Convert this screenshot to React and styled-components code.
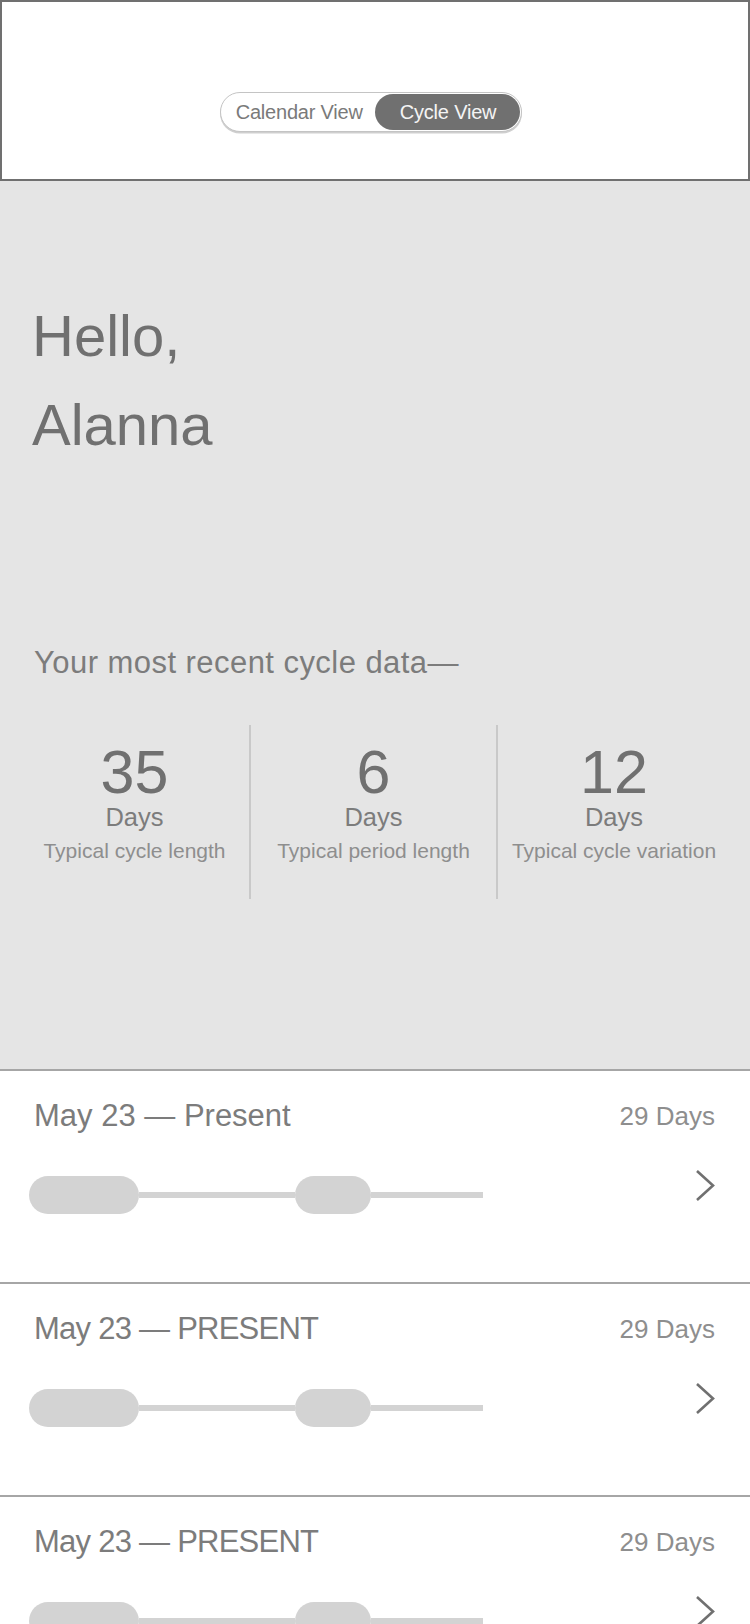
import React from 'react'
import styled, { createGlobalStyle } from 'styled-components'

const colors = {
  ink: '#707070',
  soft: '#7c7c7c',
  muted: '#8e8e8e',
  panel: '#e5e5e5',
  rule: '#a6a6a6',
  track: '#d3d3d3',
}

const GlobalStyle = createGlobalStyle`
  html, body {
    margin: 0;
    padding: 0;
    background: #fff;
  }
  body {
    font-family: "Liberation Sans", Arial, sans-serif;
    color: ${colors.ink};
    -webkit-font-smoothing: antialiased;
  }
  * { box-sizing: border-box; }
`

const Page = styled.div`
  width: 750px;
  display: flex;
  flex-direction: column;
`

const Header = styled.header`
  height: 181px;
  border: 2px solid ${colors.ink};
  display: flex;
  justify-content: center;
  align-items: flex-start;
  padding: 90px 8px 0 0;
`

const Toggle = styled.div`
  display: flex;
  align-items: center;
  height: 40px;
  padding: 1px;
  border: 1.5px solid #c4c4c4;
  border-radius: 20px;
  background: #fff;
  box-shadow: 0 1.5px 0 #cfcfcf;
`

const ToggleOption = styled.div`
  height: 100%;
  display: flex;
  align-items: center;
  padding: ${p => (p.active ? '0 24px 0 25px' : '0 12px 0 14px')};
  border-radius: 18px;
  font-size: 20px;
  letter-spacing: -0.2px;
  background: ${p => (p.active ? colors.ink : 'transparent')};
  color: ${p => (p.active ? '#f4f4f4' : '#7a7a7a')};
`

const Summary = styled.section`
  height: 888px;
  background: ${colors.panel};
  padding: 110px 0 0;
  display: flex;
  flex-direction: column;
`

const Greeting = styled.h1`
  margin: 0 0 0 32px;
  font-size: 58px;
  font-weight: 400;
  line-height: 89px;
  color: ${colors.ink};
`

const Lead = styled.p`
  margin: 176px 0 0 34px;
  font-size: 31px;
  line-height: 36px;
  color: ${colors.soft};
  letter-spacing: 0.45px;
`

const Stats = styled.div`
  margin-top: 44px;
  display: grid;
  grid-template-columns: 229px 249px 1fr;
  padding: 0 20px;
`

const Stat = styled.div`
  height: 174px;
  padding-top: 18px;
  display: flex;
  flex-direction: column;
  align-items: center;
  border-left: ${p => (p.divided ? '2px solid #c9c9c9' : 'none')};
  border-right: ${p => (p.divided ? '2px solid #c9c9c9' : 'none')};
`

const StatValue = styled.div`
  font-size: 61px;
  line-height: 59px;
  color: ${colors.ink};
`

const StatUnit = styled.div`
  font-size: 25.5px;
  line-height: 30px;
  color: ${colors.soft};
`

const StatLabel = styled.div`
  margin-top: 7px;
  font-size: 21px;
  line-height: 24px;
  color: ${colors.muted};
  white-space: nowrap;
`

const CycleRow = styled.div`
  height: 213px;
  border-top: 2px solid ${colors.rule};
  padding: 27px 35px 0 34px;
  display: flex;
  flex-direction: column;
`

const RowHead = styled.div`
  display: flex;
  justify-content: space-between;
  align-items: center;
  height: 36px;
`

const RowTitle = styled.div`
  font-size: 31px;
  letter-spacing: ${p => (p.caps ? '-0.75px' : '0')};
  color: ${colors.soft};
`

const RowDays = styled.div`
  font-size: 26px;
  color: ${colors.muted};
`

const RowBody = styled.div`
  margin-top: 42px;
  margin-left: -5px;
  display: flex;
  align-items: center;
  justify-content: space-between;
  height: 38px;
`

const Track = styled.div`
  display: flex;
  align-items: center;
`

const Phase = styled.div`
  width: ${p => p.w}px;
  height: 38px;
  border-radius: 19px;
  background: ${colors.track};
`

const Gap = styled.div`
  width: ${p => p.w}px;
  height: 6px;
  background: ${colors.track};
`

const Chevron = styled.svg`
  width: 22px;
  height: 34px;
  margin-bottom: 18px;
`

const cycles = [
  { title: 'May 23 — Present', days: '29 Days' },
  { title: 'May 23 — PRESENT', days: '29 Days', caps: true },
  { title: 'May 23 — PRESENT', days: '29 Days', caps: true },
]

const stats = [
  { value: '35', label: 'Typical cycle length' },
  { value: '6', label: 'Typical period length' },
  { value: '12', label: 'Typical cycle variation' },
]

export default function App() {
  return (
    <Page>
      <GlobalStyle />
      <Header>
        <Toggle>
          <ToggleOption>Calendar View</ToggleOption>
          <ToggleOption active>Cycle View</ToggleOption>
        </Toggle>
      </Header>

      <Summary>
        <Greeting>
          Hello,
          <br />
          Alanna
        </Greeting>
        <Lead>Your most recent cycle data—</Lead>
        <Stats>
          {stats.map((s, i) => (
            <Stat key={s.label} divided={i === 1}>
              <StatValue>{s.value}</StatValue>
              <StatUnit>Days</StatUnit>
              <StatLabel>{s.label}</StatLabel>
            </Stat>
          ))}
        </Stats>
      </Summary>

      {cycles.map((c, i) => (
        <CycleRow key={i}>
          <RowHead>
            <RowTitle caps={c.caps}>{c.title}</RowTitle>
            <RowDays>{c.days}</RowDays>
          </RowHead>
          <RowBody>
            <Track>
              <Phase w={110} />
              <Gap w={156} />
              <Phase w={76} />
              <Gap w={112} />
            </Track>
            <Chevron viewBox="0 0 22 34" fill="none">
              <polyline
                points="4,2 20,16.5 4,31"
                stroke={colors.ink}
                strokeWidth="2.6"
              />
            </Chevron>
          </RowBody>
        </CycleRow>
      ))}
    </Page>
  )
}
